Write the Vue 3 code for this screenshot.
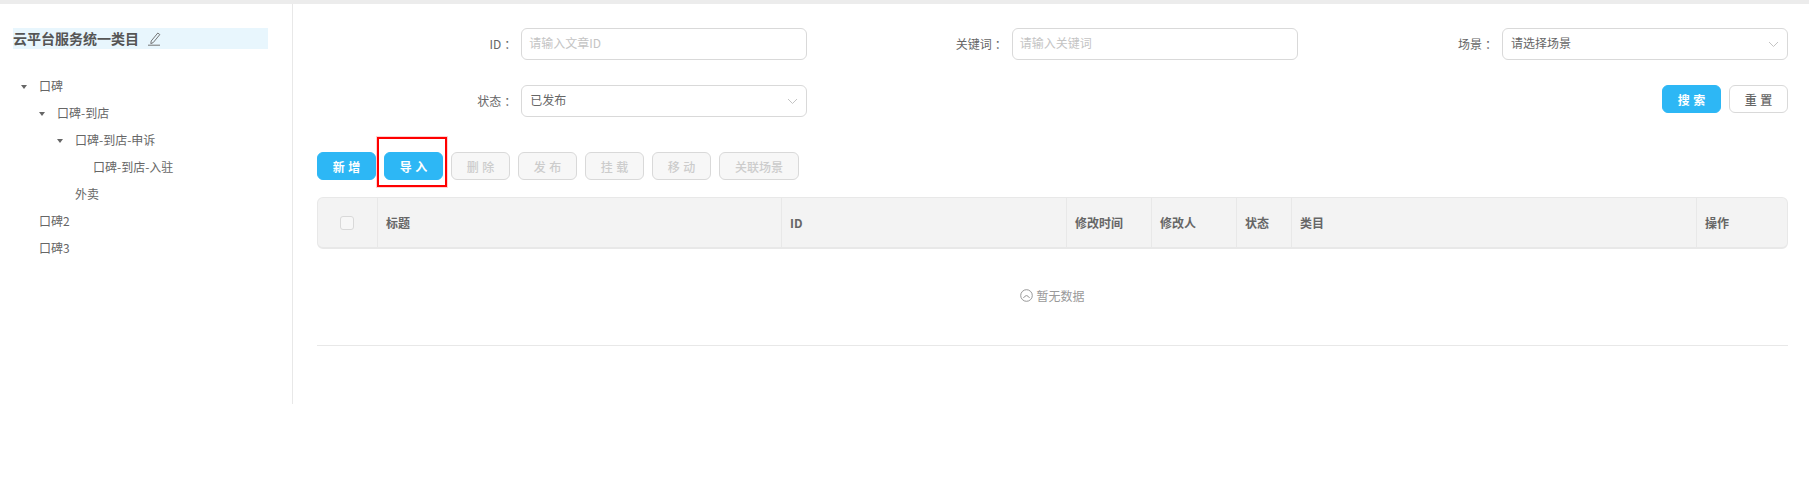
<script setup>
const tree = [
  { label: '口碑', depth: 0, arrow: true },
  { label: '口碑-到店', depth: 1, arrow: true },
  { label: '口碑-到店-申诉', depth: 2, arrow: true },
  { label: '口碑-到店-入驻', depth: 3, arrow: false },
  { label: '外卖', depth: 2, arrow: false },
  { label: '口碑2', depth: 0, arrow: false },
  { label: '口碑3', depth: 0, arrow: false },
]
const disabledActions = [
  { text: '删除', wide: false },
  { text: '发布', wide: false },
  { text: '挂载', wide: false },
  { text: '移动', wide: false },
  { text: '关联场景', wide: true },
]
const columns = [
  { text: '标题', width: 404 },
  { text: 'ID', width: 285 },
  { text: '修改时间', width: 85 },
  { text: '修改人', width: 85 },
  { text: '状态', width: 55 },
  { text: '类目', width: 405 },
  { text: '操作', width: 90 },
]
</script>

<template>
  <div class="page">
    <aside class="sidebar">
      <div class="title">
        <span>云平台服务统一类目</span>
        <svg class="edit" width="14" height="14" viewBox="0 0 14 14" fill="none" stroke="#666" stroke-width="0.9">
          <path d="M4.2 9 L10.8 1 L12.8 2.6 L6.2 10.6 L3.8 11.6 Z" />
          <path d="M1 13.2 H13" />
        </svg>
      </div>
      <ul class="tree">
        <li v-for="node in tree" :key="node.label" class="node" :style="{ paddingLeft: node.depth * 18 + 'px' }">
          <span class="switch"><i v-if="node.arrow" class="caret"></i></span>
          <span>{{ node.label }}</span>
        </li>
      </ul>
    </aside>

    <main class="main">
      <form class="filters" @submit.prevent>
        <div class="field">
          <label>ID<em>：</em></label>
          <div class="control placeholder">请输入文章ID</div>
        </div>
        <div class="field">
          <label>关键词<em>：</em></label>
          <div class="control placeholder">请输入关键词</div>
        </div>
        <div class="field">
          <label>场景<em>：</em></label>
          <div class="control select">
            <span>请选择场景</span>
            <svg width="11" height="7" viewBox="0 0 11 7" fill="none" stroke="#c4c4c4"><path d="M1 1 L5.5 5.5 L10 1" /></svg>
          </div>
        </div>
        <div class="field">
          <label>状态<em>：</em></label>
          <div class="control select">
            <span>已发布</span>
            <svg width="11" height="7" viewBox="0 0 11 7" fill="none" stroke="#c4c4c4"><path d="M1 1 L5.5 5.5 L10 1" /></svg>
          </div>
        </div>
        <div class="search-actions">
          <button class="btn primary" type="button">搜索</button>
          <button class="btn" type="button">重置</button>
        </div>
      </form>

      <div class="toolbar">
        <button class="btn primary" type="button">新增</button>
        <span class="highlighted">
          <button class="btn primary" type="button">导入</button>
          <span class="red-box"></span>
        </span>
        <button
          v-for="action in disabledActions"
          :key="action.text"
          class="btn disabled"
          :class="{ wide: action.wide }"
          type="button"
        >{{ action.text }}</button>
      </div>

      <div class="table-head">
        <div class="cell check"><span class="checkbox"></span></div>
        <div v-for="col in columns" :key="col.text" class="cell" :style="{ width: col.width + 'px' }">{{ col.text }}</div>
      </div>
      <div class="empty">
        <svg width="13" height="13" viewBox="0 0 13 13" fill="none" stroke="#8c8c8c" stroke-width="0.9">
          <circle cx="6.5" cy="6.5" r="5.8" />
          <path d="M3.4 9 Q6.5 4.2 9.6 9" />
        </svg>
        <span>暂无数据</span>
      </div>
    </main>
  </div>
</template>

<style>
html, body { background: #fff; }
</style>

<style scoped>
.page {
  display: flex;
  align-items: flex-start;
  border-top: 4px solid #ececec;
  font-family: "Noto Sans CJK SC", "Noto Sans", sans-serif;
  font-size: 12px;
  color: #666;
}
.sidebar {
  box-sizing: border-box;
  width: 293px;
  height: 400px;
  padding: 24px 24px 0 13px;
  border-right: 1px solid #e8e8e8;
}
.title {
  display: flex;
  align-items: center;
  gap: 8px;
  height: 21px;
  background: #e8f6fd;
  font-size: 14px;
  font-weight: 700;
  line-height: 21px;
  color: #555;
}
.edit { flex: none; }
.tree {
  margin: 23px 0 0;
  padding: 0 0 0 5px;
  list-style: none;
}
.node {
  display: flex;
  align-items: center;
  height: 27px;
}
.switch {
  display: flex;
  justify-content: flex-start;
  align-items: center;
  width: 21px;
  padding-left: 3px;
  box-sizing: border-box;
}
.caret {
  width: 0;
  height: 0;
  margin-top: 2px;
  border-left: 3.5px solid transparent;
  border-right: 3.5px solid transparent;
  border-top: 4px solid #666;
}
.main {
  box-sizing: border-box;
  flex: 1;
  padding: 24px 21px 0 24px;
}
.filters {
  display: grid;
  grid-template-columns: repeat(3, 1fr);
  row-gap: 25px;
}
.field {
  display: flex;
  justify-content: flex-end;
  align-items: center;
  height: 32px;
}
.field label {
  padding-bottom: 2px;
  color: #666;
  white-space: nowrap;
}
.field em {
  margin: 0 5px 0 3px;
  font-style: normal;
}
.control {
  box-sizing: border-box;
  width: 286px;
  height: 32px;
  padding: 0 8px 0 7px;
  border: 1px solid #d9d9d9;
  border-radius: 6px;
  line-height: 28px;
  background: #fff;
}
.placeholder { color: #c4c4c4; }
.select {
  display: flex;
  justify-content: space-between;
  align-items: center;
  padding-left: 8px;
  color: #666;
}
.select span { margin-top: -2px; }
.search-actions {
  grid-column: 3;
  display: flex;
  justify-content: flex-end;
  gap: 8px;
}
.btn {
  box-sizing: border-box;
  width: 59px;
  height: 28px;
  padding: 0;
  border: 1px solid #d9d9d9;
  border-radius: 6px;
  background: #fff;
  color: #666;
  font: inherit;
  font-weight: 500;
  letter-spacing: 3.5px;
  text-indent: 3.5px;
}
.btn.primary {
  border-color: #2db7f5;
  background: #2db7f5;
  color: #fff;
  font-weight: 700;
}
.btn.disabled {
  background: #f7f7f7;
  color: #ccc;
}
.btn.wide {
  width: 80px;
  letter-spacing: 0;
  text-indent: 0;
}
.toolbar {
  display: flex;
  gap: 8px;
  margin-top: 35px;
}
.highlighted {
  position: relative;
  display: block;
  height: 28px;
}
.red-box {
  position: absolute;
  top: -15px;
  left: -7px;
  width: 70px;
  height: 50px;
  box-sizing: border-box;
  border: 2px solid #f00;
  outline: 1px solid rgba(255, 0, 0, 0.18);
}
.table-head {
  box-sizing: border-box;
  display: flex;
  height: 52px;
  margin-top: 17px;
  border: 1px solid #e8e8e8;
  border-bottom-width: 2px;
  border-radius: 6px;
  background: #f3f3f3;
  font-weight: 700;
  color: #666;
}
.cell {
  box-sizing: border-box;
  display: flex;
  align-items: center;
  padding-left: 8px;
  border-left: 1px solid #e8e8e8;
}
.cell.check {
  justify-content: center;
  width: 59px;
  padding: 0 2px 0 0;
  border-left: 0;
}
.checkbox {
  box-sizing: border-box;
  width: 14px;
  height: 14px;
  border: 1px solid #d9d9d9;
  border-radius: 3px;
  background: #f7f7f7;
}
.empty {
  display: flex;
  justify-content: center;
  align-items: center;
  gap: 3px;
  height: 97px;
  padding: 0 0 4px 0;
  border-bottom: 1px solid #e8e8e8;
  box-sizing: border-box;
  color: #999;
}
</style>
